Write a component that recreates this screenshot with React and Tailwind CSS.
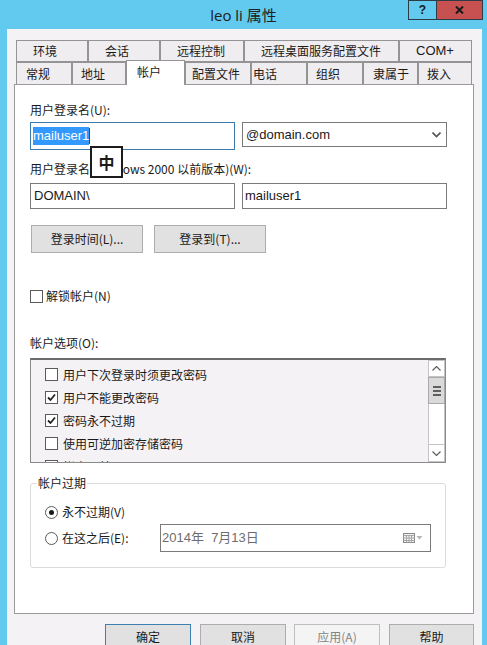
import React from 'react';

const cjk = "font-['Noto_Sans_CJK_SC',sans-serif]";
const latin = "font-['Liberation_Sans','Noto_Sans_CJK_SC',sans-serif]";

const topTabs = [
  { label: '环境', w: 'w-[72px]' },
  { label: '会话', w: 'w-[72px]' },
  { label: '远程控制', w: 'w-[84px]' },
  { label: '远程桌面服务配置文件', w: 'w-[155px]' },
  { label: 'COM+', w: 'w-[73px]', latin: true },
];

const bottomTabs = [
  { label: '常规', w: 'w-[56px]', pl: 'pl-[9px]' },
  { label: '地址', w: 'w-[54px]', pl: 'pl-[8px]' },
  { label: '帐户', w: 'w-[59px]', pl: 'pl-[10px]', selected: true },
  { label: '配置文件', w: 'w-[66px]', pl: 'pl-[6px]' },
  { label: '电话', w: 'w-[56px]', pl: 'pl-[1px]' },
  { label: '组织', w: 'w-[56px]', pl: 'pl-[8px]' },
  { label: '隶属于', w: 'w-[55px]', pl: 'pl-[9px]' },
  { label: '拨入', w: 'w-[54px]', pl: 'pl-[8px]' },
];

const options = [
  { label: '用户下次登录时须更改密码', checked: false },
  { label: '用户不能更改密码', checked: true },
  { label: '密码永不过期', checked: true },
  { label: '使用可逆加密存储密码', checked: false },
  { label: '帐户已禁用', checked: false },
];

function CheckBox({ checked }) {
  return (
    <span className="w-[13px] h-[13px] shrink-0 border border-[#5a5a5a] bg-white flex items-center justify-center">
      {checked && (
        <svg width="9" height="9" viewBox="0 0 9 9">
          <path d="M1 4.5 L3.5 7 L8 1.5" fill="none" stroke="#222" strokeWidth="1.8" />
        </svg>
      )}
    </span>
  );
}

function Radio({ checked }) {
  return (
    <span className="w-[13px] h-[13px] shrink-0 rounded-full border border-[#5a5a5a] bg-white flex items-center justify-center">
      {checked && <span className="w-[5px] h-[5px] rounded-full bg-[#1a1a1a]" />}
    </span>
  );
}

function Button({ children, className = '' }) {
  return (
    <div
      className={`h-[28px] flex items-center justify-center bg-[#e1e1e1] border border-[#adadad] text-[12px] text-[#1a1a1a] ${cjk} ${className}`}
    >
      {children}
    </div>
  );
}

export default function App() {
  return (
    <div className="w-[487px] h-[645px] bg-[#62c9ef] overflow-hidden text-[#1a1a1a]">
      {/* Title bar */}
      <div className="relative h-[29px] flex items-center justify-center">
        <span className={`text-[15px] leading-[20px] text-[#202020] font-['Open_Sans','Noto_Sans_CJK_SC',sans-serif]`}>
          leo li 属性
        </span>
        <div className="absolute top-0 right-[4px] flex">
          <div className="w-[29px] h-[20px] border border-[#2e3b44] flex items-center justify-center">
            <span className={`text-[12px] font-bold leading-none ${latin}`}>?</span>
          </div>
          <div className="w-[46px] h-[20px] border border-l-0 border-[#2e3b44] bg-[#c75050] flex items-center justify-center">
            <svg width="9" height="8" viewBox="0 0 9 8">
              <path d="M1 0.5 L8 7.5 M8 0.5 L1 7.5" stroke="#1a1a1a" strokeWidth="2" />
            </svg>
          </div>
        </div>
      </div>

      {/* Dialog body */}
      <div className="ml-[7px] w-[475px] h-[616px] bg-[#f5f2f5] pt-[11px]">
        {/* Tabs */}
        <div className="ml-[9px] flex">
          {topTabs.map((t) => (
            <div
              key={t.label}
              className={`${t.w} h-[22px] border border-[#949494] bg-[#efedf0] flex items-center pl-[16px] text-[12px] leading-[16px] ${t.latin ? latin + ' text-[13px]' : cjk}`}
            >
              {t.label}
            </div>
          ))}
        </div>
        <div className="ml-[9px] flex items-end h-[22px]">
          {bottomTabs.map((t) =>
            t.selected ? (
              <div
                key={t.label}
                className={`relative z-10 ${t.w} h-[25px] mb-[-1px] border border-b-0 border-[#949494] bg-white flex items-start pt-[3px] ${t.pl} text-[12px] leading-[16px] ${cjk}`}
              >
                {t.label}
              </div>
            ) : (
              <div
                key={t.label}
                className={`${t.w} h-[22px] border border-b-0 border-[#949494] bg-[#efedf0] flex items-center ${t.pl} text-[12px] leading-[16px] ${cjk}`}
              >
                {t.label}
              </div>
            )
          )}
        </div>

        {/* Tab page */}
        <div className="relative ml-[7px] w-[460px] h-[530px] border border-[#9b9b9b] bg-white px-[15px] flex flex-col">
          <div className={`mt-[17px] text-[12px] leading-[16px] ${cjk}`}>用户登录名(U):</div>
          <div className="mt-[4px] flex items-start">
            <div className="w-[205px] h-[28px] border border-[#3d7bad] bg-white flex items-center pl-[2px]">
              <span className={`bg-[#3399ff] text-white text-[13px] leading-[18px] ${latin}`}>mailuser1</span>
              <span className="w-[1px] h-[16px] bg-[#6b3b1a]" />
            </div>
            <div className="ml-[7px] w-[205px] h-[25px] border border-[#7a7a7a] bg-white flex items-center pl-[3px] pr-[5px]">
              <span className={`flex-1 text-[13px] ${latin}`}>@domain.com</span>
              <svg width="9" height="6" viewBox="0 0 9 6">
                <path d="M0.5 0.5 L4.5 4.5 L8.5 0.5" fill="none" stroke="#555" strokeWidth="1.6" />
              </svg>
            </div>
          </div>
          <div className={`mt-[11px] text-[12px] leading-[16px] ${cjk}`}>用户登录名(Windows 2000 以前版本)(W):</div>
          <div className="mt-[6px] flex">
            <div className="w-[205px] h-[26px] border border-[#7a7a7a] bg-white flex items-center pl-[3px]">
              <span className={`text-[13px] ${latin}`}>DOMAIN\</span>
            </div>
            <div className="ml-[7px] w-[205px] h-[26px] border border-[#7a7a7a] bg-white flex items-center pl-[2px]">
              <span className={`text-[13px] ${latin}`}>mailuser1</span>
            </div>
          </div>
          <div className="mt-[16px] flex">
            <Button className="ml-[1px] w-[112px]">登录时间(L)...</Button>
            <Button className="ml-[11px] w-[112px]">登录到(T)...</Button>
          </div>

          <div className="mt-[35px] flex items-center h-[16px]">
            <CheckBox checked={false} />
            <span className={`ml-[3px] text-[12px] leading-[16px] ${cjk}`}>解锁帐户(N)</span>
          </div>

          <div className={`mt-[31px] text-[12px] leading-[16px] ${cjk}`}>帐户选项(O):</div>
          <div className="mt-[7px] w-[416px] h-[105px] border border-[#8a8a8a] border-t-2 border-t-[#6b6b6b] bg-[#f5f2f5] flex">
            <div className="flex-1 pt-[3px] pl-[14px] overflow-hidden">
              {options.map((o) => (
                <div key={o.label} className="h-[23px] flex items-center">
                  <CheckBox checked={o.checked} />
                  <span className={`ml-[5px] text-[12px] leading-[16px] ${cjk}`}>{o.label}</span>
                </div>
              ))}
            </div>
            <div className="w-[17px] h-full border border-[#c4c4c4] bg-white flex flex-col">
              <div className="h-[16px] border-b border-[#c4c4c4] flex items-center justify-center">
                <svg width="9" height="5" viewBox="0 0 9 5">
                  <path d="M0.5 4.5 L4.5 0.5 L8.5 4.5" fill="none" stroke="#606060" strokeWidth="1.2" />
                </svg>
              </div>
              <div className="h-[27px] bg-[#dadada] border border-[#a9a9a9] mx-[-1px] flex flex-col items-center justify-center gap-[2px]">
                <span className="w-[8px] h-[2px] bg-[#606060]" />
                <span className="w-[8px] h-[2px] bg-[#606060]" />
                <span className="w-[8px] h-[2px] bg-[#606060]" />
              </div>
              <div className="flex-1" />
              <div className="h-[17px] border-t border-[#c4c4c4] flex items-center justify-center">
                <svg width="9" height="5" viewBox="0 0 9 5">
                  <path d="M0.5 0.5 L4.5 4.5 L8.5 0.5" fill="none" stroke="#606060" strokeWidth="1.2" />
                </svg>
              </div>
            </div>
          </div>

          <fieldset className="mt-[12px] w-[416px] border border-[#dcdcdc] rounded-[3px] p-0">
            <legend className={`ml-[6px] px-[1px] text-[12px] leading-[16px] ${cjk}`}>帐户过期</legend>
            <div className="pl-[14px] pb-[15px]">
              <div className="mt-[13px] h-[16px] flex items-center">
                <Radio checked />
                <span className={`ml-[4px] text-[12px] leading-[16px] ${cjk}`}>永不过期(V)</span>
              </div>
              <div className="mt-[4px] h-[28px] flex items-center">
                <div className="w-[115px] flex items-center">
                  <Radio checked={false} />
                  <span className={`ml-[4px] text-[12px] leading-[16px] ${cjk}`}>在这之后(E):</span>
                </div>
                <div className="w-[271px] h-[28px] border border-[#7a7a7a] bg-white flex items-center pl-[1px] pr-[7px]">
                  <span className={`flex-1 text-[13px] text-[#6d6d6d] ${latin}`}>2014年&nbsp;&nbsp;7月13日</span>
                  <svg width="20" height="10" viewBox="0 0 20 10">
                    <rect x="0.5" y="0.5" width="11" height="9" fill="#f0f0f0" stroke="#8a8a8a" />
                    <path d="M0.5 2.5 H11.5 M3.5 2.5 V9.5 M6 2.5 V9.5 M8.5 2.5 V9.5 M0.5 5 H11.5 M0.5 7.5 H11.5" stroke="#a8a8a8" strokeWidth="1" />
                    <path d="M13.5 3 L19.5 3 L16.5 6.5 Z" fill="#b5b5b5" />
                  </svg>
                </div>
              </div>
            </div>
          </fieldset>

          {/* IME indicator */}
          <div className="absolute left-[75px] top-[61px] w-[33px] h-[32px] border-2 border-[#1c1c1c] bg-white flex items-center justify-center">
            <span className={`text-[16px] font-bold leading-none ${cjk}`}>中</span>
          </div>
        </div>

        {/* Dialog buttons */}
        <div className="mt-[10px] ml-[98px] flex">
          <div className={`w-[86px] h-[26px] bg-[#e1e1e1] border border-[#3c7fb1] flex items-center justify-center text-[12px] ${cjk}`}>确定</div>
          <div className={`ml-[9px] w-[86px] h-[26px] bg-[#e1e1e1] border border-[#adadad] flex items-center justify-center text-[12px] ${cjk}`}>取消</div>
          <div className={`ml-[8px] w-[86px] h-[26px] bg-[#f4f4f4] border border-[#bfbfbf] flex items-center justify-center text-[12px] text-[#838383] ${cjk}`}>应用(A)</div>
          <div className={`ml-[9px] w-[85px] h-[26px] bg-[#e1e1e1] border border-[#adadad] flex items-center justify-center text-[12px] ${cjk}`}>帮助</div>
        </div>
      </div>
    </div>
  );
}
